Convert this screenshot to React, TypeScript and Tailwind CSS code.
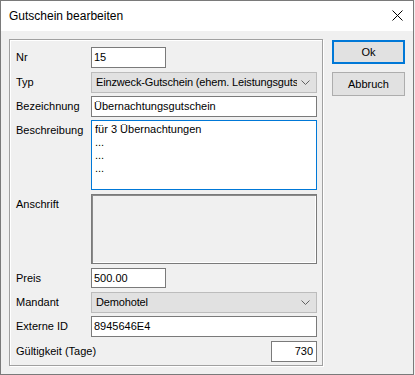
import { ReactNode } from "react";

function Row({
  label,
  children,
  className,
}: {
  label: string;
  children: ReactNode;
  className?: string;
}) {
  return (
    <div className={"flex items-start " + (className ?? "")}>
      <div className="flex h-[21px] w-[75px] shrink-0 items-center">{label}</div>
      {children}
    </div>
  );
}

function TextBox({
  value,
  width,
  height = 21,
  right,
}: {
  value: string;
  width: string;
  height?: number;
  right?: boolean;
}) {
  return (
    <div
      className={
        "flex items-center overflow-hidden whitespace-nowrap border border-[#7a7a7a] bg-white " +
        width +
        (right ? " justify-end pr-[3px]" : " pl-[2px]") +
        (height === 20 ? " h-[20px]" : " h-[21px]")
      }
    >
      {value}
    </div>
  );
}

function Chevron() {
  return (
    <svg width="9" height="5" viewBox="0 0 9 5" fill="none">
      <path d="M0.5 0.5 L4.5 4.5 L8.5 0.5" stroke="#606060" strokeWidth="1" />
    </svg>
  );
}

function Combo({ value }: { value: string }) {
  return (
    <div className="flex h-[21px] w-[226px] items-center border border-[#bcbcbc] bg-[#e1e1e1] pl-[4px]">
      <span className="flex-1 overflow-hidden whitespace-nowrap tracking-[-0.15px]">{value}</span>
      <span className="flex w-[19px] shrink-0 items-center justify-center pr-[2px]">
        <Chevron />
      </span>
    </div>
  );
}

export default function App() {
  return (
    <div className="h-[375px] w-[415px] bg-[#f0f0f0] font-['Liberation_Sans',Arial,sans-serif] text-[11px] leading-none text-black">
      <div className="flex h-[375px] w-[414px] flex-col border border-[#7a7a7a]">
        <div className="flex h-[30px] shrink-0 items-center justify-between bg-white pl-[8px] pr-[10px]">
          <span className="text-[12px]">Gutschein bearbeiten</span>
          <svg width="11" height="11" viewBox="0 0 11 11" className="mb-[1px]">
            <path d="M0.5 0.5 L10.5 10.5 M10.5 0.5 L0.5 10.5" stroke="#000" strokeWidth="1" />
          </svg>
        </div>

        <div className="flex flex-1 pl-[8px] pt-[8px]">
          <div className="flex h-[327px] w-[314px] shrink-0 flex-col border border-[#a0a0a0] pl-[6px] pt-[7px] shadow-[1px_1px_0_#ffffff,inset_1px_1px_0_#ffffff]">
            <Row label="Nr">
              <TextBox value="15" width="w-[75px]" />
            </Row>
            <Row label="Typ" className="mt-[4px]">
              <Combo value="Einzweck-Gutschein (ehem. Leistungsguts" />
            </Row>
            <Row label="Bezeichnung" className="mt-[3px]">
              <TextBox value="Übernachtungsgutschein" width="w-[226px]" />
            </Row>
            <Row label="Beschreibung" className="mt-[3px]">
              <div className="h-[70px] w-[226px] border border-[#0078d7] bg-white pl-[3px] pt-[2px] leading-[13px]">
                <div>für 3 Übernachtungen</div>
                <div>...</div>
                <div>...</div>
                <div>...</div>
              </div>
            </Row>
            <Row label="Anschrift" className="mt-[4px]">
              <div className="h-[70px] w-[226px] border border-[#7a7a7a] bg-[#f0f0f0] shadow-[inset_1px_1px_0_#8a8a8a,inset_-1px_-1px_0_#ffffff]" />
            </Row>
            <Row label="Preis" className="mt-[4px]">
              <TextBox value="500.00" width="w-[75px]" height={20} />
            </Row>
            <Row label="Mandant" className="mt-[3px]">
              <Combo value="Demohotel" />
            </Row>
            <Row label="Externe ID" className="mt-[3px]">
              <TextBox value="8945646E4" width="w-[226px]" />
            </Row>
            <div className="mt-[4px] flex items-center">
              <div className="flex-1">Gültigkeit (Tage)</div>
              <div className="mr-[5px]">
                <TextBox value="730" width="w-[46px]" right />
              </div>
            </div>
          </div>

          <div className="ml-[9px] flex flex-col gap-[8px] pt-[1px]">
            <button className="flex h-[24px] w-[73px] items-center justify-center border-2 border-[#0078d7] bg-[#e1e1e1]">
              Ok
            </button>
            <button className="flex h-[24px] w-[73px] items-center justify-center border border-[#adadad] bg-[#e1e1e1]">
              Abbruch
            </button>
          </div>
        </div>
      </div>
    </div>
  );
}
